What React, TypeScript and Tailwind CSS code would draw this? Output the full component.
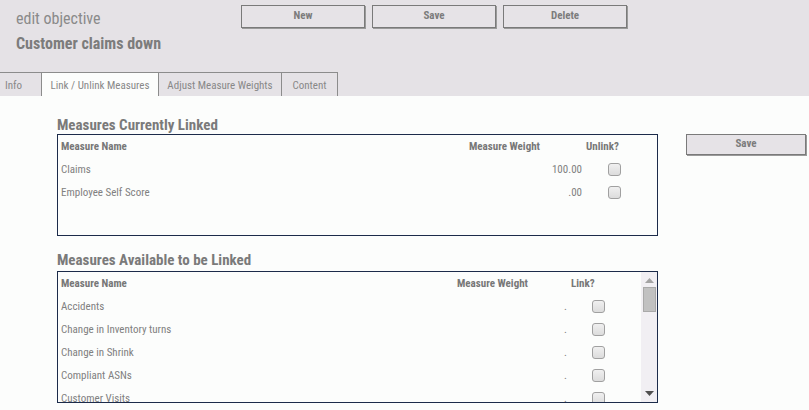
import React from "react"

const font = { fontFamily: '"Roboto Condensed", "Liberation Sans Narrow", "Arial Narrow", Roboto, sans-serif' }

const linked = [
  { name: "Claims", weight: "100.00" },
  { name: "Employee Self Score", weight: ".00" },
]

const available = [
  "Accidents",
  "Change in Inventory turns",
  "Change in Shrink",
  "Compliant ASNs",
  "Customer Visits",
  "Damages",
]

const Check = () => (
  <div className="w-[13px] h-[13px] rounded-[3px] border border-[#a0a0a0] bg-gradient-to-b from-[#f0f0f0] to-[#dcdcdc]" />
)

const HeadButton = ({ label }: { label: string }) => (
  <button className="block h-[23px] w-[124px] border border-[#7a7a7a] shadow-[1px_1px_0_#9a9a9a] bg-[#e6e3e7] text-[11px] font-bold text-[#7c7c7c]">
    {label}
  </button>
)

export default function App() {
  return (
    <div className="w-[809px] h-[410px] overflow-hidden bg-[#fcfdfc] text-[#808080]" style={font}>
      {/* header */}
      <div className="bg-[#e5e2e6] h-[96px] flex flex-col">
        <div className="flex h-[72px]">
          <div className="w-[241px] pl-4 pt-[8px]">
            <div className="text-[16px] leading-[22px] text-[#8a8a8a]">edit objective</div>
            <div className="text-[16px] leading-[18px] font-bold text-[#7c7c7c] mt-[5px]">Customer claims down</div>
          </div>
          <div className="flex items-start pt-[5px] gap-[7px]">
            <HeadButton label="New" />
            <HeadButton label="Save" />
            <HeadButton label="Delete" />
          </div>
        </div>
        <div className="flex h-[24px] text-[11px] text-[#888]">
          <div className="w-[42px] border-t border-r border-[#8c8c8c] pl-[5px] pt-[4px] flex items-center">Info</div>
          <div className="w-[117px] border-t border-r border-[#8c8c8c] bg-[#fcfdfc] pt-[4px] flex items-center justify-center">
            Link / Unlink Measures
          </div>
          <div className="w-[123px] border-t border-r border-[#8c8c8c] pt-[4px] flex items-center justify-center">
            Adjust Measure Weights
          </div>
          <div className="w-[56px] border-t border-r border-[#8c8c8c] pt-[4px] flex items-center justify-center">Content</div>
        </div>
      </div>

      {/* body */}
      <div className="flex items-start pl-[57px]">
        <div className="w-[601px] flex flex-col">
          <div className="mt-[19px] pt-[3px] text-[15px] leading-[15px] h-[19px] font-bold text-[#7a7a7a]">Measures Currently Linked</div>
          <div className="h-[102px] border border-[#1c2b4a] text-[11px]">
            <div className="grid grid-cols-[405px_120px_1fr] h-[23px] pt-[2px] items-center font-bold text-[#777]">
              <div className="pl-[3px]">Measure Name</div>
              <div className="pl-[6px]">Measure Weight</div>
              <div className="pl-[3px]">Unlink?</div>
            </div>
            {linked.map((m) => (
              <div key={m.name} className="grid grid-cols-[405px_120px_1fr] h-[23px] items-center">
                <div className="pl-[3px] pt-[2px]">{m.name}</div>
                <div className="text-right pr-[1px] pt-[2px]">{m.weight}</div>
                <div className="pl-[25px]">
                  <Check />
                </div>
              </div>
            ))}
          </div>

          <div className="mt-[17px] text-[15px] leading-[15px] h-[18px] font-bold text-[#7a7a7a]">
            Measures Available to be Linked
          </div>
          <div className="h-[132px] border border-[#1c2b4a] text-[11px] flex">
            <div className="flex-1 overflow-hidden">
              <div className="grid grid-cols-[393px_119px_1fr] h-[23px] pt-[2px] items-center font-bold text-[#777]">
                <div className="pl-[3px]">Measure Name</div>
                <div className="pl-[6px]">Measure Weight</div>
                <div className="pl-[1px]">Link?</div>
              </div>
              {available.map((n) => (
                <div key={n} className="grid grid-cols-[393px_119px_1fr] h-[23px] items-center">
                  <div className="pl-[3px] pt-[2px]">{n}</div>
                  <div className="text-right pr-[3px] pt-[2px]">.</div>
                  <div className="pl-[22px]">
                    <Check />
                  </div>
                </div>
              ))}
            </div>
            <div className="w-[16px] bg-[#f1eff3] flex flex-col items-center">
              <svg width="9" height="5" viewBox="0 0 9 5" className="mt-[6px]">
                <path d="M0 5 L4.5 0 L9 5 Z" fill="#a3a3a3" />
              </svg>
              <div className="mt-[4px] w-[13px] h-[25px] bg-[#c1c1c1] border border-[#a9a9a9]" />
              <div className="flex-1" />
              <svg width="9" height="5" viewBox="0 0 9 5" className="mb-[6px]">
                <path d="M0 0 L9 0 L4.5 5 Z" fill="#505050" />
              </svg>
            </div>
          </div>
        </div>
        <div className="pl-[28px] pt-[38px]">
          <button className="block h-[21px] w-[120px] border border-[#7a7a7a] shadow-[1px_1px_0_#9a9a9a] bg-[#e6e3e7] text-[11px] font-bold text-[#7c7c7c]">
            Save
          </button>
        </div>
      </div>
    </div>
  )
}
